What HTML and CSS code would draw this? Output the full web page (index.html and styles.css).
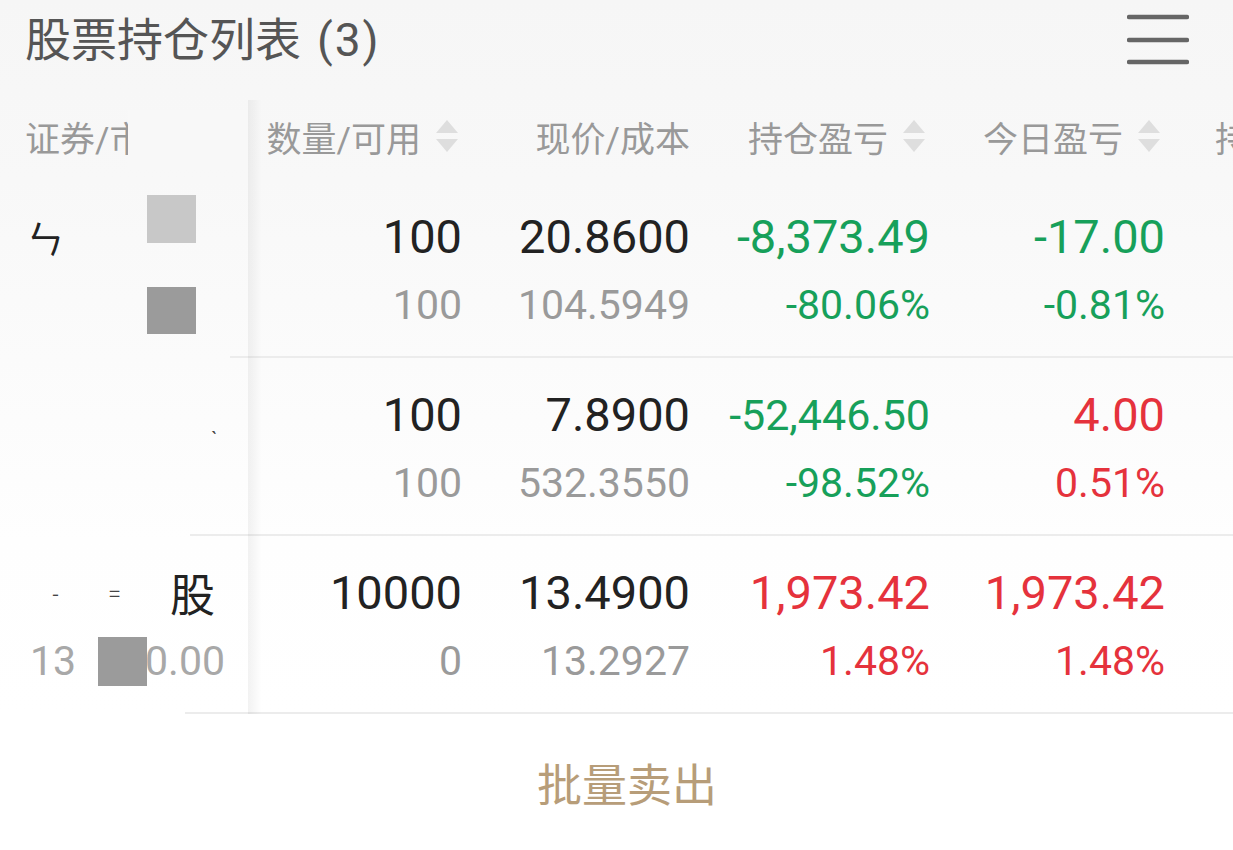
FILE: index.html
```html
<!DOCTYPE html>
<html lang="zh-CN">
<head>
<meta charset="utf-8">
<title>股票持仓列表</title>
<link rel="stylesheet" href="styles.css">
</head>
<body>
<div class="page">
  <header class="topbar">
    <h1 class="title">股票持仓列表<span class="count">(3)</span></h1>
    <svg class="menu" width="62" height="52" viewBox="0 0 62 52" aria-label="菜单">
      <line x1="2" y1="3" x2="60" y2="3" />
      <line x1="2" y1="26" x2="60" y2="26" />
      <line x1="2" y1="48" x2="60" y2="48" />
    </svg>
  </header>

  <div class="table">
    <div class="row head">
      <div class="cell left head-left"><span>证券/市值</span><span class="mask head-mask"></span></div>
      <div class="cell num c1"><span>数量/可用</span><svg class="sort" width="22" height="32" viewBox="0 0 22 32"><path d="M11 0 L22 13 L0 13 Z"/><path d="M0 19 L22 19 L11 32 Z"/></svg></div>
      <div class="cell num c2"><span>现价/成本</span></div>
      <div class="cell num c3"><span>持仓盈亏</span><svg class="sort" width="22" height="32" viewBox="0 0 22 32"><path d="M11 0 L22 13 L0 13 Z"/><path d="M0 19 L22 19 L11 32 Z"/></svg></div>
      <div class="cell num c4"><span>今日盈亏</span><svg class="sort" width="22" height="32" viewBox="0 0 22 32"><path d="M11 0 L22 13 L0 13 Z"/><path d="M0 19 L22 19 L11 32 Z"/></svg></div>
      <div class="cell c5"><span>持仓市值</span></div>
    </div>

    <div class="row">
      <div class="cell left sep-a">
        <div class="main frag">ㄣ</div>
        <div class="sub"></div>
        <span class="mask sq sq-light sq-r1a"></span>
        <span class="mask sq sq-dark sq-r1b"></span>
      </div>
      <div class="cell num"><div class="main">100</div><div class="sub">100</div></div>
      <div class="cell num"><div class="main">20.8600</div><div class="sub">104.5949</div></div>
      <div class="cell num green"><div class="main">-8,373.49</div><div class="sub">-80.06%</div></div>
      <div class="cell num green"><div class="main">-17.00</div><div class="sub">-0.81%</div></div>
      <div class="cell c5"></div>
    </div>

    <div class="row">
      <div class="cell left sep-b">
        <div class="main dotline"><span class="tiny2">ˎ</span></div>
        <div class="sub"></div>
      </div>
      <div class="cell num"><div class="main">100</div><div class="sub">100</div></div>
      <div class="cell num"><div class="main">7.8900</div><div class="sub">532.3550</div></div>
      <div class="cell num green"><div class="main fit">-52,446.50</div><div class="sub">-98.52%</div></div>
      <div class="cell num red"><div class="main">4.00</div><div class="sub">0.51%</div></div>
      <div class="cell c5"></div>
    </div>

    <div class="row">
      <div class="cell left sep-c">
        <div class="main name3"><span class="tiny">-</span><span class="tiny">=</span><span>股</span></div>
        <div class="sub value3"><span>13</span><span>00.00</span></div>
        <span class="mask sq sq-dark sq-r3"></span>
      </div>
      <div class="cell num"><div class="main">10000</div><div class="sub">0</div></div>
      <div class="cell num"><div class="main">13.4900</div><div class="sub">13.2927</div></div>
      <div class="cell num red"><div class="main">1,973.42</div><div class="sub">1.48%</div></div>
      <div class="cell num red"><div class="main">1,973.42</div><div class="sub">1.48%</div></div>
      <div class="cell c5"></div>
    </div>
  </div>

  <div class="footer">
    <button class="batch">批量卖出</button>
  </div>
</div>
</body>
</html>
```

FILE: styles.css
```css
* { box-sizing: border-box; }

html, body {
  margin: 0;
  padding: 0;
}

body {
  width: 1233px;
  height: 850px;
  overflow: hidden;
  font-family: Roboto, "Noto Sans CJK SC", sans-serif;
  background: linear-gradient(#f6f6f6 0px, #f8f8f8 180px, #fbfbfb 360px, #fefefe 540px, #ffffff 714px);
  color: #222;
}

.page {
  width: 1233px;
  height: 850px;
  display: flex;
  flex-direction: column;
}

.topbar {
  height: 100px;
  display: flex;
  justify-content: space-between;
  align-items: flex-start;
  padding: 0 44px 0 25px;
}

.title {
  margin: 0;
  font-weight: 400;
  font-size: 46px;
  line-height: 72px;
  color: #555;
  font-family: "Noto Sans CJK SC", sans-serif;
}

.count {
  font-family: Roboto, sans-serif;
  font-size: 46px;
  margin-left: 16px;
  letter-spacing: 2px;
}

.menu {
  margin-top: 14px;
  stroke: #666;
  stroke-width: 4.5;
  stroke-linecap: round;
}

.table {
  position: relative;
}

.table::after {
  content: "";
  position: absolute;
  left: 248px;
  top: 0;
  bottom: 0;
  width: 14px;
  background: linear-gradient(to right, rgba(0,0,0,0.05), rgba(0,0,0,0));
}

.row {
  display: grid;
  grid-template-columns: 248px 214px 228px 240px 235px 1fr;
  height: 178px;
}

.row.head {
  height: 80px;
}

.cell {
  position: relative;
  display: flex;
  flex-direction: column;
  padding-top: 30px;
}

.row:not(.head) > .cell:not(.left) {
  border-bottom: 2px solid #ececec;
}

.head .cell {
  flex-direction: row;
  align-items: center;
  padding-top: 0;
  padding-bottom: 8px;
  font-size: 35px;
  color: #999;
  white-space: nowrap;
}

.head .num {
  justify-content: flex-end;
}

.head .c1 { padding-right: 4px; }
.head .c3, .head .c4 { padding-right: 5px; }

.sort {
  margin-left: 15px;
  fill: #dedede;
  flex: none;
}

.head-left {
  padding-left: 25px;
  overflow: hidden;
}

.head-mask {
  position: absolute;
  left: 128px;
  top: 10px;
  width: 120px;
  height: 60px;
  background: #f8f8f8;
}

.c5 {
  padding-left: 50px;
  overflow: hidden;
}

.num {
  align-items: flex-end;
}

.main {
  font-size: 47px;
  line-height: 54px;
  height: 54px;
  color: #222;
  white-space: nowrap;
}

.main.fit {
  font-size: 43px;
}

.sub {
  margin-top: 16px;
  font-size: 41px;
  line-height: 50px;
  height: 50px;
  color: #9a9a9a;
  white-space: nowrap;
}

.green .main, .green .sub { color: #17a05a; }
.red .main, .red .sub { color: #e5323c; }

/* left (sticky) column separators, partially hidden */
.sep-a::after, .sep-b::after, .sep-c::after {
  content: "";
  position: absolute;
  right: 0;
  bottom: 0;
  height: 2px;
  background: #ececec;
}
.sep-a::after { left: 230px; }
.sep-b::after { left: 190px; }
.sep-c::after { left: 185px; }

.frag {
  padding-left: 26px;
  font-size: 38px;
  font-family: "Noto Sans CJK SC", sans-serif;
}

.dotline {
  display: flex;
  justify-content: flex-end;
  padding-right: 30px;
}

.tiny2 {
  font-size: 22px;
  color: #444;
  line-height: 70px;
}

.name3 {
  display: flex;
  justify-content: flex-end;
  align-items: center;
  padding-right: 33px;
  font-family: "Noto Sans CJK SC", sans-serif;
  font-size: 45px;
}

.tiny {
  font-size: 20px;
  color: #444;
  margin-right: 50px;
}

.value3 {
  display: flex;
  justify-content: space-between;
  padding: 0 23px 0 30px;
  color: #a8a8a8;
}

.sq {
  position: absolute;
  left: 147px;
  width: 49px;
  height: 48px;
}

.sq-light { background: #c8c8c8; }
.sq-dark { background: #9b9b9b; }

.sq-r1a { top: 15px; }
.sq-r1b { top: 107px; height: 47px; }
.sq-r3 { top: 101px; left: 98px; height: 49px; }

.footer {
  flex: 1;
  display: flex;
  align-items: center;
  justify-content: center;
  padding-left: 21px;
}

.batch {
  border: none;
  background: transparent;
  font-family: "Noto Sans CJK SC", sans-serif;
  font-size: 45px;
  color: #b79d79;
  padding: 0;
  cursor: pointer;
}
```
